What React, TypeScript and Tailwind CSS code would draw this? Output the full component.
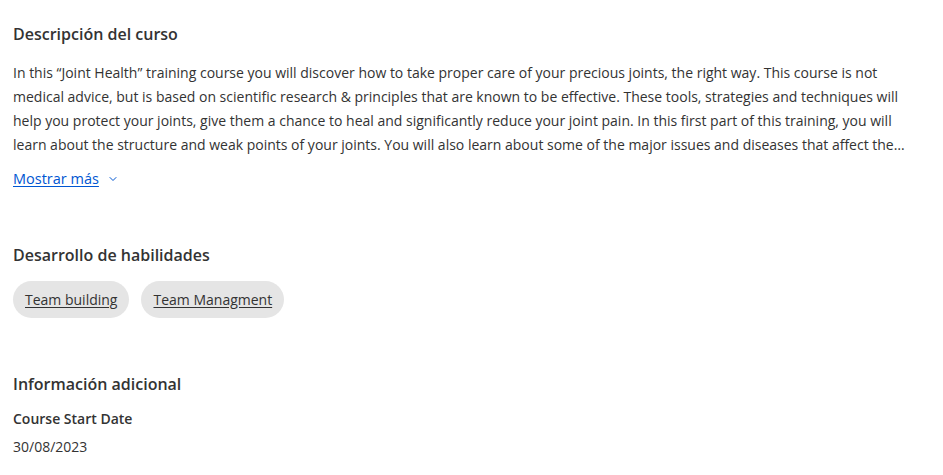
import React from "react";
import { ChevronDown } from "lucide-react";

const description =
  "In this \u201cJoint Health\u201d training course you will discover how to take proper care of your precious joints, the right way. This course is not medical advice, but is based on scientific research & principles that are known to be effective. These tools, strategies and techniques will help you protect your joints, give them a chance to heal and significantly reduce your joint pain. In this first part of this training, you will learn about the structure and weak points of your joints. You will also learn about some of the major issues and diseases that affect the joints and how to prevent and treat them naturally.";

const skills = ["Team building", "Team Managment"];

export default function App() {
  return (
    <div
      className="min-h-screen bg-white px-[13px] pt-[22px] text-[#333333]"
      style={{ fontFamily: '"Open Sans", "Noto Sans", sans-serif' }}
    >
      {/* Course description */}
      <section>
        <h2 className="text-base font-semibold leading-6">Descripción del curso</h2>
        <p className="mt-[15px] line-clamp-4 pr-[16px] text-sm leading-6">{description}</p>
        <button className="mt-3 flex items-center gap-2 text-[14.5px] leading-5 text-[#0056d2]">
          <span className="underline underline-offset-2">Mostrar más</span>
          <ChevronDown className="h-3 w-3" strokeWidth={2} />
        </button>
      </section>

      {/* Skills */}
      <section className="mt-[54px]">
        <h2 className="text-base font-semibold leading-6">Desarrollo de habilidades</h2>
        <div className="mt-[14px] flex flex-wrap gap-3">
          {skills.map((skill) => (
            <a
              key={skill}
              href="#"
              className="flex h-[37px] items-center rounded-full bg-[#e5e5e5] px-3 text-sm underline underline-offset-2"
            >
              {skill}
            </a>
          ))}
        </div>
      </section>

      {/* Additional info */}
      <section className="mt-[54px]">
        <h2 className="text-base font-semibold leading-6">Información adicional</h2>
        <h3 className="mt-[13px] text-sm font-semibold leading-5">Course Start Date</h3>
        <p className="mt-2 text-sm leading-5">30/08/2023</p>
      </section>
    </div>
  );
}
